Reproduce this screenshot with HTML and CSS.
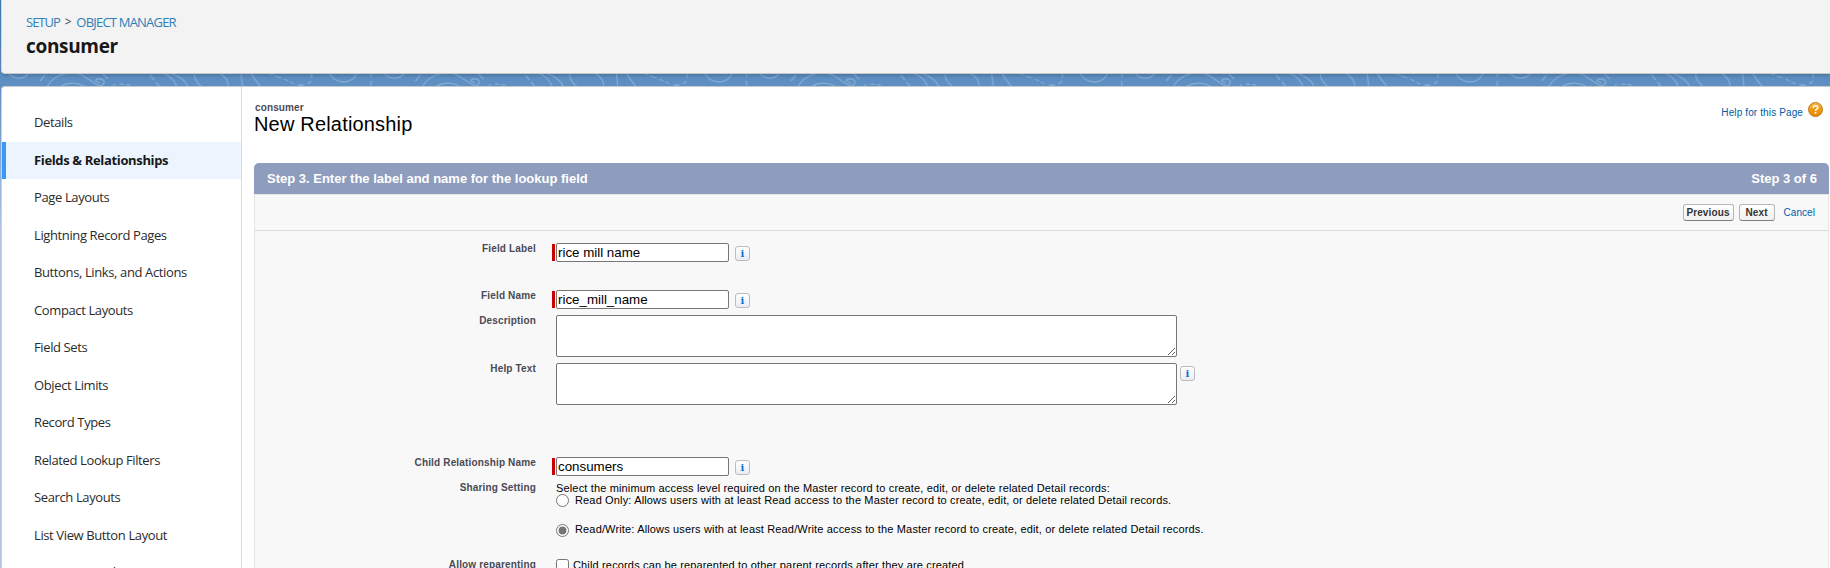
FILE: index.html
```html
<!DOCTYPE html>
<html lang="en">
<head>
<meta charset="utf-8">
<title>consumer - New Relationship</title>
<link rel="stylesheet" href="styles.css">
</head>
<body>
<div class="app">
  <svg class="topo" width="1830" height="14" viewBox="0 0 1830 14">
    <defs>
      <pattern id="contours" width="375.4" height="14" patternUnits="userSpaceOnUse">
        <g fill="none" stroke="#fff" stroke-opacity=".24" stroke-width="1.3">
          <path d="M8 -1C13 7 24 7 29 0"/>
          <path d="M40 8l5-6M103 1l5 5M150 2l4 5M156 9l3 4"/>
          <path d="M47 14C53 3 65 -1 75 0C86 1 90 10 101 13"/>
          <path d="M60 14C67 9 77 9 84 13"/>
          <path d="M95 8C98 4 105 6 104 10L101 14M95 8L100 10"/>
          <path d="M113 14l2-3M120 11l10 1" stroke-dasharray="4 2"/>
          <path d="M161 0C169 1 175 8 177 14M170 0C179 3 186 8 188 14"/>
          <path d="M194 0C194 6 198 11 202 14M219 0C226 4 229 9 228 14M241 0l1.500 14M251 0C254 6 258 10 261 14"/>
          <path d="M268 0l5 2M275 3l6 2M284 6l4 2M290 9l4 2M298 12h6M308 11l3-3M312 5l-1-5"/>
          <path d="M329 0C336 12 352 12 357 0"/>
          <path d="M371 0v4M371 8v6"/>
        </g>
      </pattern>
    </defs>
    <rect width="1830" height="14" fill="url(#contours)"/>
  </svg>

  <header class="page-header">
    <nav class="crumbs"><a class="setup">SETUP</a><span class="sep">&gt;</span><a>OBJECT MANAGER</a></nav>
    <h1 class="object-name">consumer</h1>
  </header>

  <div class="card">
    <ul class="side">
      <li class="side-item">Details</li>
      <li class="side-item active">Fields &amp; Relationships</li>
      <li class="side-item">Page Layouts</li>
      <li class="side-item">Lightning Record Pages</li>
      <li class="side-item">Buttons, Links, and Actions</li>
      <li class="side-item">Compact Layouts</li>
      <li class="side-item">Field Sets</li>
      <li class="side-item">Object Limits</li>
      <li class="side-item">Record Types</li>
      <li class="side-item">Related Lookup Filters</li>
      <li class="side-item">Search Layouts</li>
      <li class="side-item">List View Button Layout</li>
      <li class="side-item">Restriction Rules</li>
    </ul>

    <main class="main">
      <div class="title-row">
        <div>
          <div class="kicker">consumer</div>
          <h2 class="title">New Relationship</h2>
        </div>
        <div class="help"><a>Help for this Page</a>
          <svg width="15" height="15" viewBox="0 0 15 15">
            <defs><linearGradient id="amber" x1="0" y1="0" x2="0" y2="1"><stop offset="0" stop-color="#f6b44a"/><stop offset=".5" stop-color="#f29a12"/><stop offset="1" stop-color="#e08a08"/></linearGradient></defs>
            <circle cx="7.500" cy="7.500" r="7" fill="url(#amber)" stroke="#b87410" stroke-width=".9"/>
            <path d="M5.200 5.800C5.200 3.100 9.800 3.100 9.800 5.600C9.800 7.200 7.500 7.200 7.500 9" fill="none" stroke="#fff" stroke-width="1.500"/>
            <rect x="6.700" y="10" width="1.700" height="1.600" fill="#fff"/>
          </svg>
        </div>
      </div>

      <div class="band"><span>Step 3. Enter the label and name for the lookup field</span><span>Step 3 of 6</span></div>
      <div class="panel">
        <div class="actions"><button class="btn prev">Previous</button><button class="btn next">Next</button><a class="cancel">Cancel</a></div>
        <div class="form">
          <label class="label">Field Label</label>
          <div class="field"><i class="required"></i><input class="input" value="rice mill name"><span class="info">i</span></div>
          <label class="label">Field Name</label>
          <div class="field"><i class="required"></i><input class="input" value="rice_mill_name"><span class="info">i</span></div>
          <label class="label">Description</label>
          <div class="field"><textarea class="area"></textarea></div>
          <label class="label">Help Text</label>
          <div class="field"><textarea class="area"></textarea><span class="info area-info">i</span></div>
          <label class="label">Child Relationship Name</label>
          <div class="field"><i class="required"></i><input class="input" value="consumers"><span class="info">i</span></div>
          <label class="label">Sharing Setting</label>
          <div class="sharing">
            <div class="intro">Select the minimum access level required on the Master record to create, edit, or delete related Detail records:</div>
            <label class="option"><input type="radio" name="share"><span>Read Only: Allows users with at least Read access to the Master record to create, edit, or delete related Detail records.</span></label>
            <label class="option second"><input type="radio" name="share" checked><span>Read/Write: Allows users with at least Read/Write access to the Master record to create, edit, or delete related Detail records.</span></label>
          </div>
          <label class="label">Allow reparenting</label>
          <label class="reparent"><input type="checkbox"><span>Child records can be reparented to other parent records after they are created</span></label>
        </div>
      </div>
    </main>
  </div>
</div>
</body>
</html>
```
FILE: styles.css
```css
* { box-sizing: border-box; }
html, body { margin: 0; height: 568px; overflow: hidden; }
.app {
  position: relative;
  display: flex;
  flex-direction: column;
  gap: 12px;
  height: 568px;
  padding-left: 1px;
  background: linear-gradient(#3f7db8 0, #5f90c4 86px, #b0c4e2 230px, #b0c4e2 100%);
  overflow: hidden;
}
.topo { position: absolute; left: 0; top: 73px; }

.page-header {
  position: relative;
  height: 74px;
  flex: none;
  padding: 13px 0 0 24px;
  background: #f3f3f3;
  border-bottom: 1px solid #c9c9c9;
  border-left: 1px solid #d6d6d6;
  border-bottom-left-radius: 4px;
  box-shadow: 0 2px 3px rgba(0, 0, 0, .16);
  font-family: "Open Sans", sans-serif;
}
.crumbs { display: flex; height: 18px; font-size: 13px; line-height: 18px; letter-spacing: -.79px; color: #2f7fb8; }
.setup { letter-spacing: -1px; }
.sep { width: 16.500px; padding-left: 5px; color: #444; font-size: 12px; }
.object-name { margin: 0; padding-top: 1px; font-size: 19px; line-height: 28px; letter-spacing: -.32px; color: #181818; }

.card {
  position: relative;
  flex: 1;
  display: flex;
  background: #fff;
  border-top: 1px solid #c9c9c9;
  border-left: 1px solid #d0d0d0;
  border-top-left-radius: 4px;
}
.side {
  flex: none;
  width: 240px;
  height: 481px;
  margin: 0;
  padding: 17px 0 0;
  list-style: none;
  border-right: 1px solid #dddbda;
  overflow: hidden;
  font-family: "Open Sans", sans-serif;
}
.side-item { height: 37.500px; padding-left: 32px; font-size: 13px; line-height: 37.500px; letter-spacing: -.38px; color: #2b2b2b; white-space: nowrap; }
.side-item.active { padding-left: 28px; border-left: 4px solid #3b97fb; background: #ecf4fe; font-weight: 700; letter-spacing: -.35px; color: #181818; }

.main { flex: 1; padding: 15px 1px 0 12px; font-family: "Liberation Sans", Arial, sans-serif; }
.title-row { display: flex; justify-content: space-between; height: 61px; padding-right: 6px; }
.kicker { padding: 0 0 0 1px; font-size: 10px; font-weight: 700; line-height: 12px; letter-spacing: .12px; color: #4a4a56; }
.title { margin: 0; font-size: 20px; font-weight: 400; line-height: 20px; letter-spacing: .18px; color: #000; }
.help { display: flex; gap: 5px; height: 15px; color: #015ba7; font-size: 10px; line-height: 22px; letter-spacing: .12px; }

.band {
  display: flex;
  justify-content: space-between;
  height: 31px;
  padding: 0 12px 0 13px;
  border-radius: 5px 5px 0 0;
  background: #8e9dbe;
  color: #fff;
  font-size: 13px;
  font-weight: 700;
  line-height: 31px;
}
.panel { height: 380px; border: 1px solid #e6e6e6; background: #f8f8f8; }
.actions { display: flex; justify-content: flex-end; height: 36px; padding: 9px 13px 0 0; border-bottom: 1px solid #dbdbdb; font-size: 10px; }
.btn {
  height: 17px;
  margin: 0 5px 0 0;
  padding: 0;
  border: 1px solid #b5b5b5;
  border-bottom-color: #7f7f7f;
  border-radius: 3px;
  background: linear-gradient(#fff, #f1f1f1);
  color: #333;
  font: 700 10px/15px "Liberation Sans", Arial, sans-serif;
  letter-spacing: .12px;
}
.prev { width: 51px; }
.next { width: 36px; margin-right: 9px; }
.cancel { color: #015ba7; line-height: 17px; letter-spacing: .06px; }

.form {
  display: grid;
  grid-template-columns: 281px 1fr;
  grid-template-rows: 47px 25px 48px 94px 25px 77px 20px;
  column-gap: 16px;
  padding-top: 12px;
}
.label { color: #4a4a56; font-size: 10px; font-weight: 700; line-height: 12px; letter-spacing: .16px; text-align: right; }
.field { display: flex; align-items: flex-start; padding-left: 4px; }
.required { width: 3px; height: 17px; margin: 1px 1px 0 -4px; background: #c00; }
.input {
  width: 173px;
  height: 19px;
  margin: 0;
  padding: 0 1px;
  border: 1px solid #767676;
  border-radius: 2px;
  background: #fff;
  color: #000;
  font: 13.33px "Liberation Sans", Arial, sans-serif;
}
.area { width: 621px; height: 42px; margin: 0; border: 1px solid #767676; border-radius: 2px; background: #fff; overflow: hidden; }
.info {
  width: 15px;
  height: 15px;
  margin: 3px 0 0 6px;
  border: 1px solid #bcbcbc;
  border-radius: 3px;
  background: linear-gradient(#fff, #e9edf3);
  color: #0a6fd6;
  font: 700 10px/13px "DejaVu Serif", serif;
  text-align: center;
}
.area-info { margin-left: 3px; }
.sharing { padding-left: 4px; font-size: 11px; letter-spacing: .153px; }
.intro { height: 12px; line-height: 13px; }
.option { display: flex; height: 13px; line-height: 13px; }
.option span { padding-left: 6px; }
.option input, .reparent input { flex: none; width: 13px; height: 13px; margin: 0; accent-color: #767676; }
.option.second { margin-top: 17px; line-height: 11px; }
.reparent { display: flex; padding-left: 4px; font-size: 11px; line-height: 13px; letter-spacing: .153px; }
.reparent span { padding-left: 4px; }
```
